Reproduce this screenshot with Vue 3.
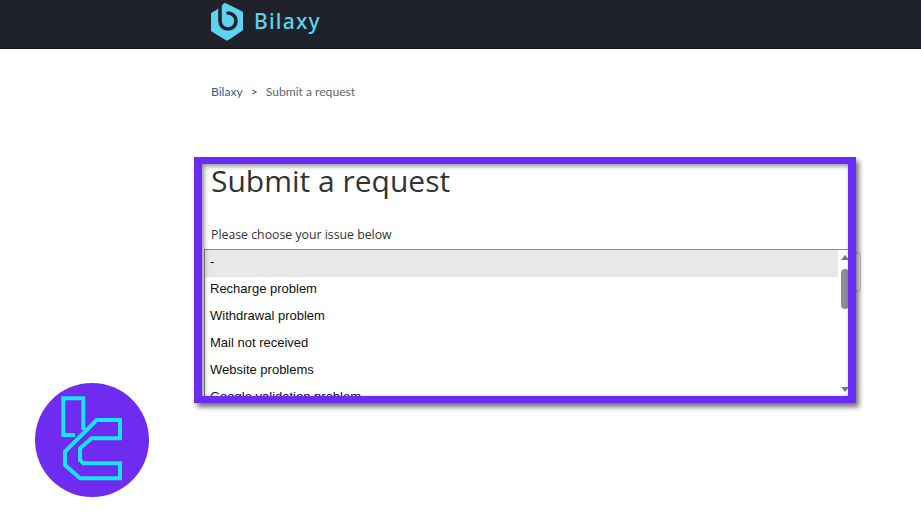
<template>
  <div class="page">
    <header class="topbar">
      <div class="brand">
        <svg class="brand-icon" viewBox="0 0 36 40" width="36" height="40">
          <path d="M15 3 L31 11 V27 L17 36.5 L3 28 V12 L7 10 L15 3 Z" fill="#5fd2f2" stroke="#5fd2f2" stroke-width="4" stroke-linejoin="round" />
          <path d="M10 0 V19 A8 8 0 1 0 18 11" fill="none" stroke="#1f222b" stroke-width="3.6" stroke-linecap="round" />
        </svg>
        <span class="brand-name">Bilaxy</span>
      </div>
    </header>

    <main class="content">
      <nav class="crumbs">
        <a class="crumb-link">Bilaxy</a>
        <span class="crumb-sep">&gt;</span>
        <span>Submit a request</span>
      </nav>

      <section class="form-block">
        <h1 class="title">Submit a request</h1>
        <label class="field-label">Please choose your issue below</label>
        <div class="select-stub"></div>
        <div class="listbox">
          <ul class="options">
            <li
              v-for="(item, i) in issues"
              :key="item"
              class="option"
              :class="{ selected: i === 0 }"
            >{{ item }}</li>
          </ul>
          <div class="scrollbar">
            <span class="arrow up"></span>
            <span class="thumb"></span>
            <span class="arrow down"></span>
          </div>
        </div>
        <div class="frame"></div>
      </section>
    </main>

    <div class="badge">
      <svg viewBox="0 0 114 114" width="114" height="114">
        <path
          d="M48.3 47 V15.3 H28.3 V52 H40"
          fill="none"
          stroke="#14e6f6"
          stroke-width="4"
        />
        <path
          d="M85 37 H61.7 L30 68.7 V82 L45 95.3 H85 V80.3 H48.3 L45 77 V65.3 L56.7 55.3 H85 Z"
          fill="none"
          stroke="#14e6f6"
          stroke-width="4"
        />
      </svg>
    </div>
  </div>
</template>

<script setup>
const issues = [
  '-',
  'Recharge problem',
  'Withdrawal problem',
  'Mail not received',
  'Website problems',
  'Google validation problem'
]
</script>

<style>
html,
body {
  margin: 0;
  background: #fff;
}
</style>

<style scoped>
.page {
  width: 921px;
  height: 532px;
  position: relative;
  overflow: hidden;
  background: #fff;
  font-family: "Open Sans", "Liberation Sans", sans-serif;
}
.topbar {
  height: 48px;
  background: #1f222b;
  border-bottom: 1px solid #14161c;
  padding-left: 210px;
  display: flex;
  align-items: flex-start;
}
.brand {
  display: flex;
  align-items: center;
  gap: 8px;
  margin-top: 2px;
}
.brand-name {
  margin-top: -3px;
  color: #5fd2f2;
  font-family: "Noto Sans", sans-serif;
  font-size: 21px;
  font-weight: 500;
  letter-spacing: 1.2px;
}
.content {
  padding: 33px 0 0 211px;
}
.crumbs {
  display: flex;
  gap: 8px;
  font-family: Lato, "Open Sans", sans-serif;
  font-size: 12.1px;
  line-height: 20px;
  color: #666;
}
.crumb-link {
  color: #2f5d9b;
}
.crumb-sep {
  color: #555;
}
.form-block {
  position: relative;
  margin-top: 58px;
  width: 638px;
}
.title {
  margin: -1px 0 0;
  font-size: 30px;
  font-weight: 400;
  line-height: 44px;
  color: #333;
}
.field-label {
  display: block;
  margin-top: 21px;
  font-size: 12.3px;
  line-height: 22px;
  color: #333;
}
.select-stub {
  position: absolute;
  left: 640px;
  top: 93px;
  width: 9px;
  height: 38px;
  border: 1px solid #ccc;
  border-left: none;
  border-radius: 0 4px 4px 0;
}
.listbox {
  display: flex;
  margin: 3px 0 0 -7px;
  width: 645px;
  height: 152px;
  border-top: 1px solid #8a8a8a;
  border-left: 1px solid #8a8a8a;
  overflow: hidden;
}
.options {
  flex: 1;
  margin: 0;
  padding: 0;
  list-style: none;
  font-family: "Liberation Sans", Arial, sans-serif;
  font-size: 13px;
  color: #111;
}
.option {
  height: 27px;
  line-height: 23px;
  padding-left: 5px;
}
.option.selected {
  background: #e8e8e8;
}
.scrollbar {
  width: 12px;
  display: flex;
  flex-direction: column;
  align-items: center;
  padding: 5px 0 0 1px;
  box-sizing: border-box;
}
.arrow {
  width: 0;
  height: 0;
  border-left: 4px solid transparent;
  border-right: 4px solid transparent;
}
.arrow.up {
  border-bottom: 5px solid #777;
}
.arrow.down {
  border-top: 5px solid #777;
  margin-top: 78px;
}
.thumb {
  width: 8px;
  height: 40px;
  margin-top: 9px;
  background: #8f8f8f;
  border-radius: 4px;
}
.frame {
  position: absolute;
  left: -17px;
  top: -2px;
  width: 646px;
  height: 232px;
  border-style: solid;
  border-color: #6a2bf5;
  border-width: 7px 8px 7px 8px;
  box-shadow: 3px 4px 5px rgba(0, 0, 0, 0.55), inset 2px 2px 5px rgba(0, 0, 0, 0.45);
}
.badge {
  position: absolute;
  left: 35px;
  top: 383px;
  width: 114px;
  height: 114px;
  border-radius: 50%;
  background: #6f2cf0;
}
</style>
